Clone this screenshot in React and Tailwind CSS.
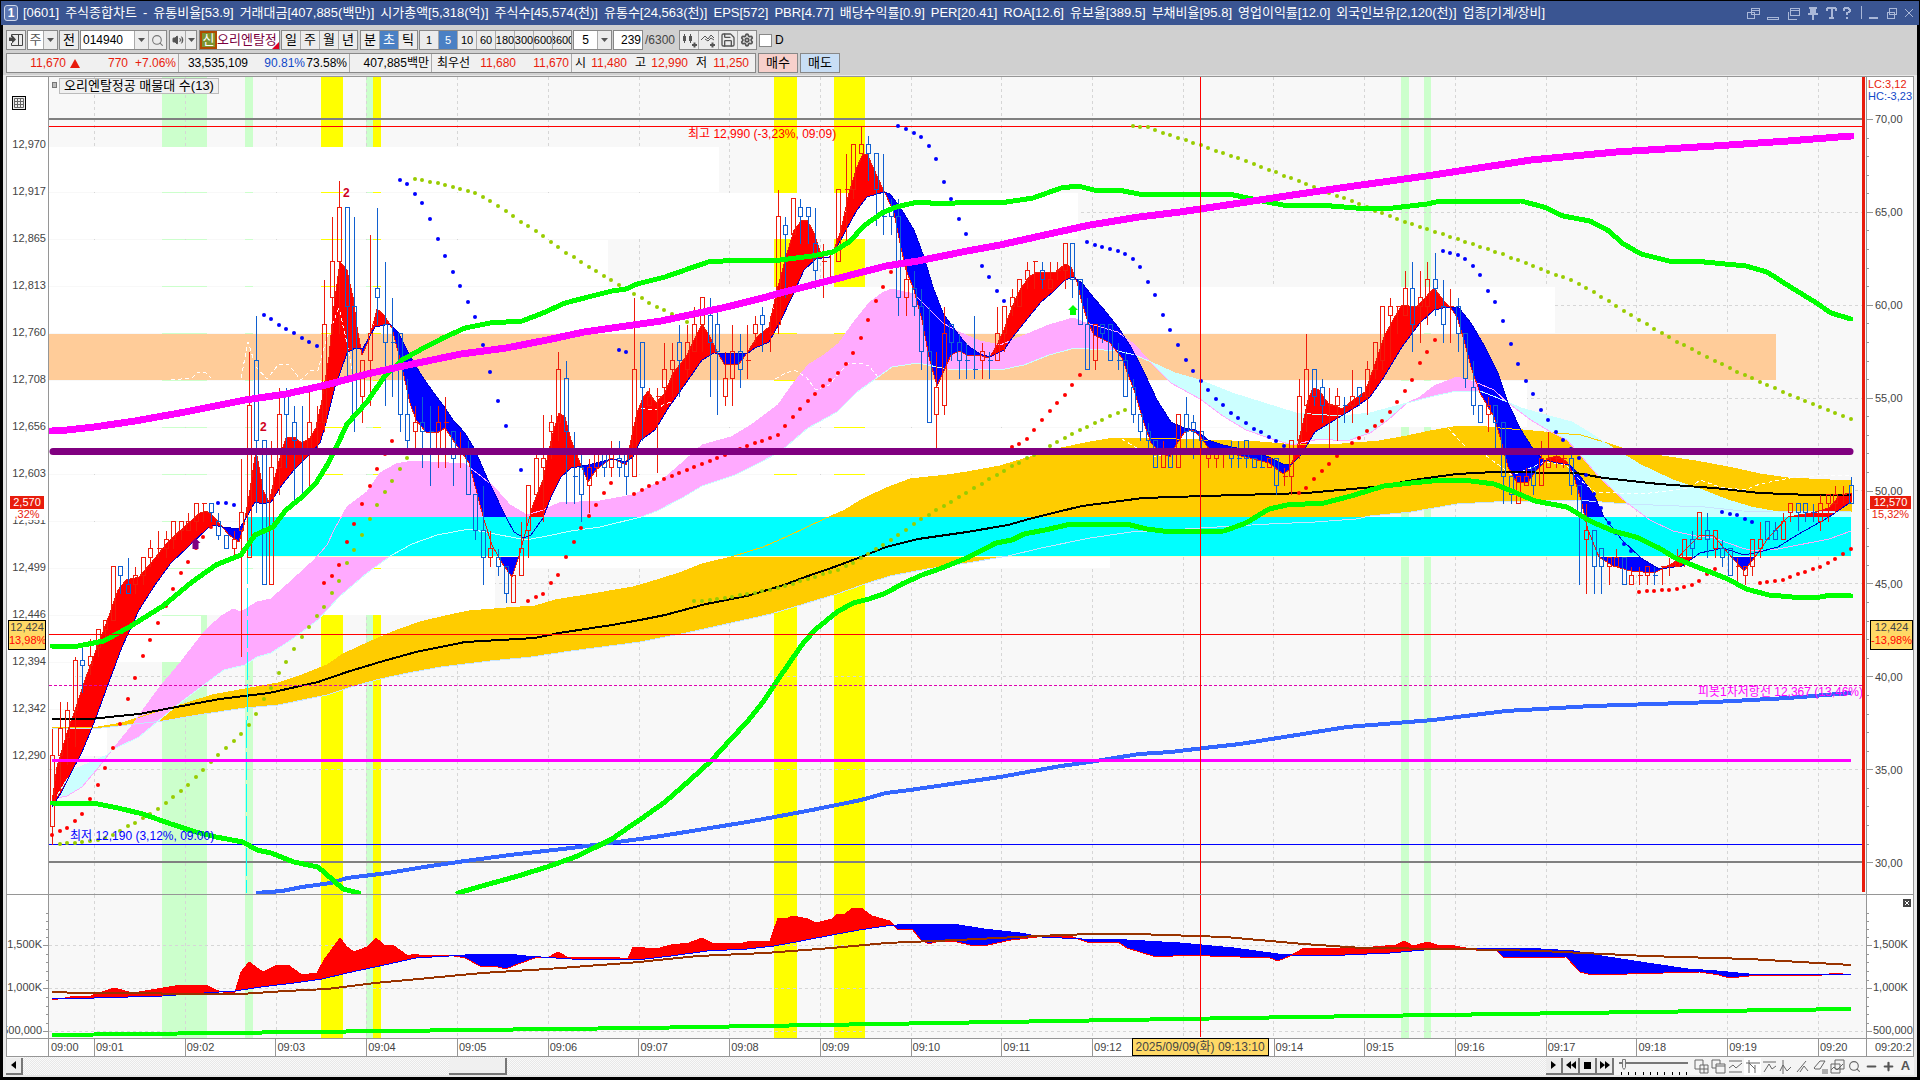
import React from 'react';
import { Search, Save, Settings, Volume2, Plus, Minus } from 'lucide-react';

const STEP = 7.556;
const barX = (i) => Math.round(52.2 + STEP * i);
const tickY = (k) => Math.round(844.3 - 8.975 * k);

const toPoints = (s) => s.trim().split(/\s+/).map((p) => p.split(',').map(Number));

const valueAt = (pts, x) => {
  if (x <= pts[0][0]) return pts[0][1];
  for (let i = 1; i < pts.length; i++) {
    if (x <= pts[i][0]) {
      const [x0, y0] = pts[i - 1];
      const [x1, y1] = pts[i];
      return y0 + ((y1 - y0) * (x - x0)) / (x1 - x0 || 1);
    }
  }
  return pts[pts.length - 1][1];
};

const FAST = `52,802 57,767 67,733 76,707 86,677 100,640 110,613 118,590 126,580 139,577 151,563 167,543 184,527 200,513 206,511 212,515 220,524 229,535 239,542 244,525 250,490 256,450 263,490 269,502 275,477 282,450 286,438 294,437 302,443 310,438 316,428 322,400 329,357 333,313 340,262 347,270 353,297 357,327 362,355 369,340 377,309 384,315 392,328 402,367 410,403 416,420 426,432 437,433 445,428 453,440 465,457 469,463 477,493 484,520 492,545 502,563 512,577 520,553 526,530 533,505 543,480 549,450 553,433 559,413 565,417 571,440 580,463 588,482 596,470 612,458 626,465 631,440 637,413 643,398 648,391 656,403 665,393 673,373 686,357 694,340 702,324 710,337 718,353 724,364 739,364 747,353 757,337 769,327 777,290 786,257 794,230 802,220 807,220 814,233 822,257 829,258 835,247 841,230 849,193 857,167 863,154 867,154 873,167 882,187 886,195 894,213 900,243 906,270 914,290 922,320 929,357 937,386 943,373 951,355 959,351 967,355 982,356 989,358 996,347 1004,330 1012,307 1020,290 1029,277 1037,272 1055,273 1065,264 1071,267 1077,282 1082,303 1088,322 1094,335 1110,343 1122,358 1129,377 1135,393 1143,420 1151,443 1161,453 1170,457 1175,447 1184,433 1192,430 1200,436 1209,449 1246,457 1269,463 1283,474 1289,470 1296,452 1303,423 1308,400 1313,388 1319,390 1328,403 1342,409 1356,398 1365,392 1374,367 1384,337 1393,320 1402,305 1416,307 1425,298 1434,288 1443,300 1450,307 1457,317 1464,340 1471,367 1480,393 1494,417 1501,440 1508,467 1517,483 1528,482 1537,470 1549,458 1558,456 1567,462 1574,477 1581,500 1588,530 1599,557 1613,566 1631,571 1654,573 1673,563 1687,548 1700,535 1714,536 1728,553 1744,571 1755,557 1769,537 1788,517 1811,513 1829,508 1840,495 1851,493`;
const SLOW = `52,807 61,793 71,773 82,752 94,723 106,690 122,647 139,610 155,585 171,563 188,547 208,528 214,525 222,527 239,529 245,520 255,502 263,504 271,502 282,485 294,470 314,450 320,443 326,423 335,387 347,353 355,348 363,348 369,338 375,327 390,324 398,332 408,352 420,373 433,392 443,405 453,420 465,433 475,450 488,480 506,517 514,532 524,538 531,535 543,518 551,497 561,477 571,468 588,465 612,459 626,462 633,457 641,440 655,430 669,407 686,383 702,360 714,353 747,354 755,348 769,342 780,322 792,297 804,270 816,259 829,257 837,247 845,232 857,210 867,197 884,192 890,194 900,207 914,230 924,257 933,287 943,313 955,330 967,345 980,354 990,357 1004,350 1012,338 1024,323 1041,302 1053,292 1065,280 1073,277 1082,283 1094,298 1106,312 1118,327 1131,347 1143,370 1157,400 1171,422 1184,428 1196,430 1208,440 1223,445 1246,450 1269,457 1283,464 1292,464 1301,455 1315,432 1338,418 1356,407 1370,397 1384,377 1402,347 1420,323 1434,310 1448,307 1459,308 1471,323 1485,347 1498,373 1508,403 1521,430 1535,452 1544,460 1558,463 1570,465 1581,477 1595,497 1604,517 1622,540 1641,558 1659,569 1682,566 1700,553 1723,548 1744,555 1755,553 1778,547 1797,535 1829,517 1851,502`;
const CLOUD_A = `57,798 67,796 82,787 98,768 112,750 131,727 143,710 159,688 180,663 204,632 220,617 233,609 241,612 257,602 271,599 290,582 314,560 327,545 335,528 347,507 367,492 380,473 396,464 412,461 449,463 465,464 482,477 494,487 510,505 527,515 543,510 559,503 600,501 633,495 661,481 682,463 702,445 731,437 751,425 778,405 792,385 808,365 824,355 839,343 853,323 869,303 882,293 892,289 914,294 927,307 943,323 959,332 980,341 1000,345 1020,337 1049,325 1073,318 1086,323 1118,332 1135,345 1151,363 1171,383 1200,399 1223,416 1246,430 1269,438 1292,445 1319,439 1347,441 1370,433 1388,420 1407,403 1420,397 1434,386 1457,377 1475,382 1494,390 1508,403 1531,420 1549,431 1567,440 1576,450 1599,477 1627,503 1650,520 1673,531 1696,536 1714,538 1742,548 1755,551 1778,549 1829,539 1851,531`;
const CLOUD_B = `57,796 66,781 75,769 96,760 107,755 112,750 139,737 163,717 180,703 204,685 224,670 245,665 257,657 271,653 294,638 318,620 339,597 367,573 392,555 412,544 437,535 469,529 490,533 526,540 547,536 571,531 600,527 641,517 657,511 682,498 702,486 735,475 759,463 780,452 808,428 837,412 857,392 878,377 892,367 918,363 947,369 1000,370 1024,365 1049,355 1075,348 1118,351 1135,355 1151,362 1175,373 1200,380 1232,393 1264,403 1296,413 1342,416 1370,413 1407,403 1434,396 1457,391 1480,391 1498,398 1521,408 1549,416 1572,422 1590,433 1613,448 1641,465 1673,480 1700,489 1728,500 1751,507 1778,512 1851,512`;
const GOLD_TOP = `52,727 98,727 122,723 155,712 184,704 212,695 245,689 278,683 302,675 327,665 343,654 367,643 392,632 420,622 445,616 469,611 506,608 535,606 555,600 592,594 633,587 657,580 682,572 702,564 731,557 763,547 788,536 824,519 845,510 861,500 886,488 910,479 947,475 967,472 1000,466 1033,456 1061,448 1090,442 1114,438 1147,438 1204,440 1260,442 1296,445 1342,444 1379,441 1407,436 1430,431 1453,427 1475,426 1512,429 1544,432 1581,435 1604,442 1622,448 1655,455 1696,461 1733,468 1760,474 1788,478 1851,481`;
const GOLD_LOW = `52,729 102,728 135,724 163,721 204,714 245,708 278,705 327,695 351,687 380,679 408,673 441,667 490,661 531,657 571,651 640,642 665,637 686,633 731,623 771,614 804,604 837,594 865,584 890,576 927,569 967,563 1008,556 1041,548 1090,538 1131,532 1171,530 1200,528 1269,524 1315,522 1356,519 1370,516 1411,512 1457,504 1494,502 1576,500 1627,504 1705,507 1742,511 1851,512`;
const BLACK = `52,719 90,719 139,714 171,708 220,699 269,693 318,682 347,672 380,662 416,652 465,642 535,638 559,633 612,625 640,620 665,615 706,604 747,596 784,585 808,576 837,566 861,557 886,547 918,539 967,532 1008,525 1029,519 1057,512 1082,506 1143,498 1204,496 1306,493 1374,487 1420,479 1457,474 1494,472 1576,473 1604,478 1659,484 1714,488 1760,493 1811,495 1851,495`;
const MAGENTA = `52,431 67,430 94,427 135,421 185,412 245,400 286,394 326,385 367,374 408,365 461,354 506,348 547,340 584,332 640,324 661,321 722,308 763,298 784,292 812,285 886,266 918,261 967,251 1000,245 1049,234 1090,225 1139,217 1180,212 1240,203 1286,196 1347,187 1433,175 1531,160 1616,152 1714,146 1788,141 1851,136`;
const BLUE = `256,893 282,891 302,887 331,883 347,878 388,873 424,867 465,861 510,855 571,848 640,839 661,836 698,830 747,822 780,816 812,810 861,800 886,793 910,790 951,784 1000,777 1033,771 1061,766 1090,762 1139,754 1171,752 1204,748 1240,744 1347,727 1433,720 1506,711 1592,706 1714,702 1788,698 1851,693`;

const GREENS = [
  `52,646 78,646 104,641 131,626 163,606 192,582 216,565 241,555 255,535 273,527 286,510 302,497 316,483 326,467 335,450 347,424 367,402 384,377 402,360 420,350 443,338 465,328 490,323 522,321 543,313 565,303 592,296 612,291 626,289 637,284 665,277 708,262 739,260 780,260 812,256 833,252 849,242 865,225 882,213 896,207 918,202 943,204 967,202 1000,203 1033,198 1061,188 1078,186 1098,191 1118,190 1139,194 1229,194 1262,201 1283,205 1319,205 1356,208 1393,208 1427,204 1436,202 1521,201 1544,207 1563,216 1590,221 1609,231 1622,243 1641,254 1673,262 1694,261 1746,266 1767,272 1792,288 1815,302 1831,313 1851,319`,
  `52,803 98,804 118,808 143,814 171,824 196,832 216,837 243,842 257,850 271,853 294,862 318,867 333,880 343,889 359,893`,
  `458,893 482,886 518,876 547,867 575,857 596,847 612,839 629,827 641,819 665,802 690,780 712,760 731,739 747,722 763,702 775,684 790,662 804,642 816,629 837,612 853,603 869,599 886,593 902,584 922,575 939,569 967,558 996,543 1012,540 1024,534 1045,530 1071,524 1126,524 1147,529 1171,532 1224,531 1246,523 1269,509 1287,505 1324,503 1351,496 1384,486 1411,483 1443,480 1471,481 1494,484 1512,491 1535,501 1567,507 1590,521 1613,531 1636,537 1659,548 1677,559 1705,570 1728,579 1746,589 1769,595 1792,597 1820,597 1831,595 1851,596`,
];

const WHITE_LINES = [
  `171,380 192,378 198,372 206,373 211,378`,
  `241,378 248,342 256,367 267,379 278,365 288,364 301,380 310,371 318,370 327,337 339,308 347,343 355,385`,
  `641,408 655,410 665,404 675,401`,
  `775,379 786,373 794,370 806,377 816,390 829,385 841,371 849,363 861,363 869,366 878,377`,
  `1122,439 1140,450 1156,457 1175,451 1200,453`,
  `1448,428 1459,440 1471,452 1485,455 1496,463 1512,475 1526,470 1544,462 1566,465 1580,480 1595,492 1620,493 1650,493 1690,488 1700,480 1720,487 1745,490 1760,484 1790,478 1830,475 1850,476`,
];

const BLUE_DOTS = [
  `218,503 225,503 233,505`,
  `263,314 278,324 301,337 316,346`,
  `399,179 407,184 414,193 422,203 429,216 437,236 444,254 452,270 460,286 467,300 475,317 482,341 490,372 497,398 505,422 512,448 520,470`,
  `618,350 626,352`,
  `898,126 905,129 913,132 920,136 928,144 936,159 943,180 951,199 958,217 966,234 981,264 996,289 1004,301`,
  `1087,242 1102,247 1124,253 1132,258 1140,267 1147,280 1155,295 1162,313 1170,330 1185,358 1192,370 1200,380 1215,398 1230,412 1238,418 1253,428 1268,436 1283,446`,
  `1442,251 1457,254 1464,258 1472,265 1480,275 1487,289 1495,302 1502,318 1510,341 1517,362 1525,379 1540,408 1555,431 1570,448 1578,455 1585,473 1593,492 1608,522 1623,543 1631,551`,
  `1721,512 1736,515 1752,522`,
];
const RED_DOTS = [
  `52,835 67,828 82,814 89,801 97,787 104,770 112,751 120,724 127,702 135,678 142,658 157,625 165,608 172,591 180,574 188,562 195,549 203,537 210,527`,
  `324,583 331,578 339,565 346,544 354,524 361,506 369,488 376,471 384,456 392,441`,
  `528,601 543,594 550,584 558,575 565,559 573,544 580,530 588,517 596,505 603,494 611,483`,
  `633,494 656,483 671,476 694,467 724,455 747,446 777,436 784,427 792,418 807,402 822,387 838,373 845,366 852,355 860,340 868,320 875,303 883,287 890,272`,
  `1011,448 1026,440 1034,430 1049,412 1064,396 1072,385 1079,375`,
  `1299,493 1306,488 1321,472 1336,457 1351,444 1366,432 1381,422 1389,413 1396,403 1404,393 1412,380 1419,365 1427,352 1434,340`,
  `1638,592 1676,589 1691,585 1699,581 1706,575 1714,569`,
  `1759,583 1782,580 1804,572 1820,567 1835,559 1850,549`,
];
const OLIVE_DOTS = [
  `59,844 82,842 97,840 112,836 127,827 142,819 157,810 172,798 188,785 203,770 218,755 233,742 240,735 248,727 256,714 263,701 271,688 278,675 293,651 308,628 324,607 339,581 346,565 354,550 369,521 376,507 384,494 392,481 407,458`,
  `414,179 437,183 452,187 475,193 497,205 520,221 543,236 565,252 588,266 618,284 648,302 664,310 686,322`,
  `694,601 701,601 731,597 775,589 808,579 837,570 852,564 861,558 883,545 898,535 920,520 935,511 951,502 966,493 988,480 1011,467 1026,459 1049,447 1064,438 1094,423 1124,410`,
  `1132,126 1147,127 1170,135 1200,145 1223,153 1238,158 1351,201 1381,213 1412,224 1442,234 1472,244 1502,254 1540,269 1578,283 1600,296 1623,310 1653,328 1676,341 1714,360 1744,375 1774,388 1812,404 1850,419`,
];

// colour, high, body top, body bottom, low (10 won ticks above 12,190)
const CANDLES = `r13 10 2 0|r16 13 10 6|r16 15 12 9|r21 20.5 15 11|b22 20.5 20 17|r23 21 20 19|r24 24 22 21|r25 25 24 23|r31 31 25 25|b31 31 30 28|b32 29 28 28|r31 30 29 28
r32 32 30 29|r34 33 32 31|r35 33 33 32|r35 34 33 32|r36 36 34 33|r36 36 35 34|r37 36 35 35|r38 38 36 35|r38 38 38 36|b38 38 37 36|b37 36 34.5 34|b34.5 34.5 33 33
r35 34 33 32|r43 37 35 21|r55 49 32 32|b59 54 45 37|b45 45 29 29|r45 42 29 29|r51 48 42 39|b51 50 48 42|b49 47 45 38|b49 44 44 39|r51 47 44 40|r49 47 47 44
r63 58 47 46|r70 65 61 57|r74 71 65 57|b71 71 60 52|b70 60 48 46|r54 54 50 47|r68 57 54 49|b71 62 61 58|b65 58 56 49|b61 56 56 50|b57 57 48 46|b52 48 45 44
r49 47 46 44|b50 47 46 42|b49 46 46 40|r49 47 44 42|r50 47 47 42|b46 46 43 40|r46 44 44 42|b45 44 39 39|b39 39 35 34|b40 35 32 29|r35 33 32 31|b33 32 31 30
b31 31 28 27|r30 30 27 27|r36 33 30 30|r40 40 35 32|r44 43 39 39|r48 43 42 36|r48 47 46 43|r55 53 47 45|b54 52 46 38|b46 41 41 38|b44 42 39 36|r43 42 40 37
r44 44 42 41|b44 44 42 41|r45 44 42 41|b45 43 42 41|b44 44 41 39|r61 53 41 41|b56 56 51 45|r51 50 49 49|r51 50 50 41.5|r56 53 51 49|r56 54 53 50|b58 56 54 50
r58 56 53 52|r60 58 55 55|r61 61 58 55|b61 59 56 50|b60 58 55 48|r55 52 50 49|r58 55 52 49|b57 55 53 51|r58 54 54 52|r59 58 57 56|b60 59 58 55|r59 57 57 55
r73 70 58 57|b70 69 68 61|r72 72 68 68|b72 71 70 67|b71 71 70 67|b71 67 64 62|r67 65 65 61|r66 66 66 63|r73 73 65 65|r77 73 73 67|r78 78 73 72|r80 78 77 77
b79 78 77 74|b77 77 73 69|b77 70 70 68|b72 71 70 68|b72 70 61 59|r65 63 61 59|b64 62 60 59|b62 60 55 53|b60 55 47 47|r55 51 48 44|r60 57 49 48|b58 58 56 54
b57 56 54 52|b56 54 54 52|b59 53 53 52|r56 55 54 52|b55 54 54 52|r60 57 54 54|r60 60 57 55|r62 61 60 59|r63 63 60 60|r65 64 63 62|r65 65 65 62|b65 64 63 62
r65 63 62 62|r65 64 64 63|r67 67 64 62|b67 67 63 61|b63 63 58 58|b61 58 53 53|r58 58 54 53|b58 58 57 56|b58 58 54 54|b56 54 54 53|b55 54 50 50|b52 51 48 47
b48 48 46 45|b47 46 45 44|b45 45 42 42|r45 44 42 42|b44 44 42 42|r48 48 42 42|b50 48 46 44|b48 47 46 43|b46 46 45 44|r44 44 43 42|r44 44 43 42|r44 44 44 42
b45 44 43 42|b45 43 43 42|b45 45 43 42|b43 43 42 42|b44 42 42 42|r43 43 42 42|b43 43 40 39|r42 41 41 40|r45 45 41 39|r52 50 45 43|r57 53 49 46|b53 53 50 49
b52 51 49 47|r51 49 49 44|r51 50 49 45|b50 49 49 47|r53 50 49 47|b51 51 50 49|r54 53 50 48|r56 56 53 52|r60 60 54 53|r61 60 59 54|r60 60 60 57|r64 62 59 59
b65 62 58 55|r64 61 60 56|r65 63 60 58|b66 63 62 59|b63 60 58 56|r62 60 60 56|b61 60 57 55|b57 57 52 51|b54 51 49 48|b49 49 47 47|r50 49 48 46|b49 49 47 44
b47 47 41 38|b41 41 39 38|r41 41 38 38|r42 41 40 40|b42 42 40 39|r45 43 40 40|r46 43 42 42|r44 43 43 42|r44 43 43 42|b44 43 40 39|b40 40 37 29|r38 35 34 28
b35 35 31 28|b33 33 31 28|r32 32 31 29|r33 32 31 31|b32 32 29 29|r31 30 29 29|r31 30 30 29|r31 31 30 29|b31 30 30 29|r31 31 31 29|r32 31 31 30|r33 32 31 31
r34 34 32 31|b35 34 33 32|r37 37 34 34|b37 35 34 32|r35 35 33 32|b34 33 32 31|b33 33 30 30|r32 31 31 29|r31 31 30 29|r34 34 31 30|r36 34 33 32|b36 36 34 34
b36 35 34 34|r37 36 34 34|r38 38 37 36|b38 38 37 35|b38 38 37 36|b38 37 37 36|r39 38 36 35|r39 39 38 36|r40 39 38 37|r40 39 39 38|b41 40 38 38`
  .split(/[|\n]/)
  .map((s) => ({ up: s[0] === 'r', v: s.slice(1).split(' ').map(Number) }));

const VOL_FAST = `52,1000 65,998 75,996 88,997 102,992 114,988 133,993 163,988 175,986 206,985 216,990 226,993 235,992 241,972 249,962 257,968 263,972 277,965 288,965 302,975 317,973 324,960 340,938 347,947 354,952 367,947 376,938 384,945 394,946 408,956 414,954 424,956 449,955 465,958 482,967 494,966 506,969 518,964 535,958 549,957 558,952 569,958 612,957 628,959 633,947 656,949 671,945 689,943 702,938 712,943 743,943 752,941 770,941 778,918 785,919 793,916 808,919 816,923 832,919 837,914 845,914 853,908 861,908 872,916 890,921 897,929 912,929 921,940 929,944 939,941 953,941 970,945 988,945 1011,940 1037,937 1064,934 1087,942 1118,942 1127,948 1153,956 1167,957 1180,955 1270,958 1278,961 1290,956 1304,948 1329,949 1362,948 1396,945 1404,941 1413,946 1428,942 1437,945 1455,946 1476,950 1496,950 1504,958 1566,957 1580,972 1592,975 1700,972 1719,975 1729,978 1749,976 1823,975 1835,973 1851,975`;
const VOL_SLOW = `52,998 94,998 163,996 204,993 235,991 261,987 294,983 322,979 347,973 375,967 416,958 449,956 482,954 508,954 526,956 571,959 628,960 645,959 671,956 707,951 747,949 774,946 801,941 832,935 859,930 886,926 908,924 953,924 984,929 1020,933 1042,937 1082,939 1127,940 1180,943 1234,948 1278,954 1292,955 1345,955 1390,953 1435,949 1464,948 1500,948 1541,949 1574,951 1602,956 1647,963 1688,969 1717,971 1749,974 1851,975`;
const VOL_BROWN = `52,992 82,993 241,994 286,991 327,989 375,983 429,978 482,973 547,969 640,962 658,960 698,956 765,953 832,948 886,943 957,940 1037,936 1091,934 1136,934 1225,937 1304,944 1362,948 1455,949 1541,951 1647,956 1749,959 1851,965`;
const VOL_GREEN = `52,1035 640,1028 1300,1017 1851,1009`;

const GREEN_BARS = [[162, 45], [245, 8], [366, 7], [1401, 8], [1424, 7]];
const YELLOW_BARS = [[321, 22], [373, 8], [774, 23], [834, 31]];
const PROFILE = [
  [147, 45, 719], [193, 46, 1078], [240, 46, 608], [287, 46, 1555], [381, 46, 1527],
  [428, 46, 1340], [475, 46, 1250], [522, 46, 1110], [569, 46, 495], [616, 46, 201], [663, 46, 75], [710, 46, 107],
];
const MINUTES = Array.from({ length: 20 }, (_, i) => Math.round(94.3 + 90.7 * i));

const Line = ({ d, color, w = 1, dash }) => (
  <polyline points={d} fill="none" stroke={color} strokeWidth={w} strokeDasharray={dash} strokeLinejoin="round" strokeLinecap={w > 4 ? 'round' : 'butt'} />
);

const Band = ({ a, b, over, under }) => {
  const pa = toPoints(a);
  const pb = toPoints(b);
  let up = '';
  let down = '';
  for (let x = pa[0][0]; x < pa[pa.length - 1][0]; x += 2) {
    const ya = valueAt(pa, x + 1);
    const yb = valueAt(pb, x + 1);
    const col = `M${x} ${ya.toFixed(1)}h2V${yb.toFixed(1)}h-2z`;
    if (ya < yb) up += col;
    else down += col;
  }
  return (
    <g shapeRendering="crispEdges">
      <path d={up} fill={over} />
      <path d={down} fill={under} />
    </g>
  );
};

const Dots = ({ lines, color }) =>
  lines.map((l, n) => {
    const pts = toPoints(l);
    const from = Math.round((pts[0][0] - 52.2) / STEP);
    const to = Math.round((pts[pts.length - 1][0] - 52.2) / STEP);
    return (
      <g key={n} fill={color}>
        {Array.from({ length: to - from + 1 }, (_, i) => {
          const x = barX(from + i);
          return <circle key={i} cx={x} cy={Math.round(valueAt(pts, x))} r="2" />;
        })}
      </g>
    );
  });

const Candles = () => (
  <g shapeRendering="crispEdges" fill="none">
    {CANDLES.map(({ up, v }, i) => {
      const x = barX(i) + 0.5;
      const [h, t, b, l] = v.map((k) => tickY(k) + 0.5);
      const body = b - t < 2 ? `M${x - 2} ${t}h5` : `M${x - 2} ${t}h4V${b}h-4z`;
      return <path key={i} d={`M${x} ${h}V${t}M${x} ${b}V${l}${body}`} stroke={up ? '#ee1c0c' : '#1060d0'} />;
    })}
  </g>
);

const Grid = ({ top, bottom, rows }) => (
  <g shapeRendering="crispEdges">
    {GREEN_BARS.map(([x, w]) => <rect key={x} x={x} y={top} width={w} height={bottom - top} fill="#ccffcc" />)}
    {YELLOW_BARS.map(([x, w]) => <rect key={x} x={x} y={top} width={w} height={bottom - top} fill="#ffff00" />)}
    <g stroke="#d6d6d6" strokeDasharray="3 3">
      {MINUTES.map((x) => <path key={x} d={`M${x}.5 ${top}V${bottom}`} />)}
      {rows.map((y) => <path key={y} d={`M49 ${y}.5H1863`} />)}
    </g>
  </g>
);

const PriceChart = () => (
  <svg viewBox="49 77 1817 817" preserveAspectRatio="none" className="absolute inset-0 h-full w-full bg-[#f8f8f8]">
    <Grid top={77} bottom={894} rows={[212, 305, 398, 490, 583, 676, 769]} />
    <g shapeRendering="crispEdges">
      {PROFILE.map(([y, h, x]) => <rect key={y} x="49" y={y} width={x - 49} height={h} fill="#fff" />)}
      <rect x="49" y="334" width="1727" height="46" fill="#ffcc99" />
      <path d="M49 119H1863M49 862H1863" stroke="#808080" strokeWidth="2" />
      <path d="M49 126.5H1863" stroke="#ff0000" />
      <path d="M49 844.5H1863" stroke="#0000ff" />
    </g>
    <Band a={GOLD_TOP} b={GOLD_LOW} over="#ffcc00" under="#ffcc00" />
    <Band a={CLOUD_A} b={CLOUD_B} over="#ffaaff" under="#ccffff" />
    <Band a={FAST} b={SLOW} over="#ff0000" under="#0000ff" />
    <rect x="247" y="517" width="1604" height="39" fill="#00ffff" />
    <path d="M247 556.5H1851" stroke="#ffffcc" />
    <g shapeRendering="crispEdges">
      <Line d={GOLD_TOP} color="#ffcc00" />
      <Line d={GOLD_LOW} color="#c8e4ff" />
      <Line d={CLOUD_A} color="#ffaaff" />
      <Line d={CLOUD_B} color="#ccffff" />
      <Line d={FAST} color="#ee1c0c" />
      <Line d={SLOW} color="#0000cc" />
      {WHITE_LINES.map((l) => <Line key={l} d={l} color="#fff" dash="4 3" />)}
      <Line d={BLACK} color="#000" w={2} />
      <path d="M247.5 556V720M246 720V893" stroke="#00ffff" strokeWidth="1" strokeDasharray="28 4" />
    </g>
    <Candles />
    <Dots lines={OLIVE_DOTS} color="#99cc00" />
    <Dots lines={RED_DOTS} color="#ff0000" />
    <Dots lines={BLUE_DOTS} color="#0000ff" />
    <g shapeRendering="crispEdges">
      <Line d={BLUE} color="#3366ff" w={4} />
      {GREENS.map((l) => <Line key={l} d={l} color="#00ff00" w={5} />)}
      <path d="M52 760.5H1851" stroke="#ff00ff" strokeWidth="3" />
      <path d="M49 685.5H1863" stroke="#e000b0" strokeDasharray="3 2" />
    </g>
    <path d="M53 451.5H1850" stroke="#800080" strokeWidth="7" strokeLinecap="round" />
    <g shapeRendering="crispEdges">
      <Line d={MAGENTA} color="#ff00ff" w={7} />
    </g>
    <path d="M195.5 538l5 5h-2v6h-6v-6h-2z" fill="#800080" />
    <path d="M1073 305l5 5h-2v5h-6v-5h-2z" fill="#00ff00" />
    <g shapeRendering="crispEdges">
      <path d="M49 634.5H1863M1200.5 77V894" stroke="#ff0000" />
      <path d="M1863.5 77V892" stroke="#e81c0c" strokeWidth="3" />
    </g>
  </svg>
);

const VolumeChart = () => (
  <svg viewBox="49 895 1817 143" preserveAspectRatio="none" className="absolute inset-0 h-full w-full bg-[#f8f8f8]">
    <Grid top={895} bottom={1038} rows={[945, 988, 1031]} />
    <Band a={VOL_FAST} b={VOL_SLOW} over="#ff0000" under="#0000ff" />
    <g shapeRendering="crispEdges">
      <Line d={VOL_FAST} color="#ff0000" />
      <Line d={VOL_SLOW} color="#0000ff" />
      <Line d={VOL_BROWN} color="#993300" w={2} />
      <Line d={VOL_GREEN} color="#00ff00" w={4} />
      <path d="M1200.5 895V1037" stroke="#ff0000" />
    </g>
  </svg>
);

const TITLE = [
  '[0601]', '주식종합차트', '-', '유통비율[53.9]', '거래대금[407,885(백만)]', '시가총액[5,318(억)]', '주식수[45,574(천)]', '유통수[24,563(천)]',
  'EPS[572]', 'PBR[4.77]', '배당수익률[0.9]', 'PER[20.41]', 'ROA[12.6]', '유보율[389.5]', '부채비율[95.8]', '영업이익률[12.0]', '외국인보유[2,120(천)]', '업종[기계/장비]',
];

const TitleBar = () => (
  <header className="mx-px mt-px flex h-6 shrink-0 items-center bg-[#3a5592] pl-[3px] pr-1 text-white">
    <span className="mr-[5px] flex h-4 w-[14px] items-center justify-center rounded-[3px] border border-[#d0d8ea] bg-[#5c76b2] text-xs font-bold">1</span>
    <h1 className="flex min-w-0 flex-1 gap-[6px] overflow-hidden whitespace-nowrap leading-5">
      {TITLE.map((t) => <span key={t}>{t}</span>)}
    </h1>
    <svg width="168" height="16" viewBox="0 0 168 16" className="shrink-0" fill="none" stroke="#aab8d8" shapeRendering="crispEdges">
      <path d="M4.5 3.5h8v6h-8zM4.5 5h8M.5 7.5h7v6h-7zM20 12.5h11v2h-11zM43.5 3.5h9v7h-9zM43.5 5h9M41 7v7h9" />
      <path d="M62 2h8v2h-1v4h2v2h-4v5h-2v-5h-4v-2h2V4h-1z" fill="#aab8d8" stroke="none" />
      <path d="M80 3h9M80 3v3M88.5 3v3M84.5 3v10M82 13h5" strokeWidth="2" />
      <path d="M96.5 6V4.5l2-2h2l2 2v2l-3 2V10M99.5 12v2" strokeWidth="2" />
      <path d="M114.5 1v13" />
      <path d="M122 13h9" strokeWidth="2" />
      <path d="M142.5 3.5h7v6h-7zM140.5 7.5h7v6h-7z" fill="#3a5592" />
      <path d="M158 4l8 8M166 4l-8 8" shapeRendering="auto" />
    </svg>
  </header>
);

const Arrow = ({ label, className = 'w-[14px]' }) => (
  <button aria-label={label} className={`flex h-full shrink-0 items-center justify-center border-l border-[#aaa] bg-[#ececec] ${className}`}>
    <svg width="7" height="4" viewBox="0 0 7 4"><path d="M0 0h7L3.5 4z" fill="#555" /></svg>
  </button>
);

const box = 'flex h-5 shrink-0 border border-[#888]';

const Group = ({ items, active, className }) => (
  <div className={`${box} bg-[#ececec] ${className}`}>
    {items.map((t) => (
      <button
        key={t}
        className={`flex min-w-0 flex-1 items-center justify-center overflow-hidden border-l border-[#aaa] first:border-l-0 ${t === active ? 'bg-[#4a80c4] text-white' : ''}`}
      >
        {t}
      </button>
    ))}
  </div>
);

const Toolbar = () => (
  <div className="flex h-5 items-center gap-px pl-[3px] whitespace-nowrap">
    <button aria-label="창 이동" className={`${box} w-5 items-center justify-center bg-[#ececec]`}>
      <svg width="14" height="12" viewBox="0 0 14 12" fill="none" stroke="#444"><path d="M2.500 3V.5h11v11h-11V9M9.500.5v11" /><path d="M0 3.500h3V1l4 4.500-4 4V7H0z" fill="#444" stroke="none" /></svg>
    </button>
    <div className={`${box} w-[31px] bg-white`}>
      <span className="flex-1 self-center text-center text-[#555]">주</span>
      <Arrow label="구분 선택" />
    </div>
    <button className={`${box} w-5 items-center justify-center bg-[#ececec]`}>전</button>
    <div className={`${box} w-[87px] bg-white`}>
      <input aria-label="종목코드" defaultValue="014940" className="w-[53px] bg-white pl-[2px] text-xs outline-none" />
      <Arrow label="종목 선택" />
      <button aria-label="종목 검색" className="flex flex-1 items-center justify-center border-l border-[#aaa] bg-[#ececec]"><Search size={13} color="#777" /></button>
    </div>
    <div className={`${box} ml-px w-7 bg-[#ececec]`}>
      <button aria-label="소리" className="flex flex-1 items-center justify-center"><Volume2 size={12} color="#555" fill="#555" /></button>
      <Arrow label="소리 선택" className="w-[11px]" />
    </div>
    <div className={`${box} relative ml-px w-[81px] bg-white`}>
      <span className="flex w-[17px] shrink-0 items-center justify-center border-2 border-[#b04a00] bg-[#7c9430] text-white">신</span>
      <span className="flex-1 self-center text-[#7a0040]">오리엔탈정</span>
      <svg width="7" height="7" className="absolute bottom-0 right-0"><path d="M7 0v7H0z" fill="#e00020" /></svg>
    </div>
    <Group items={['일', '주', '월', '년']} className="w-[77px]" />
    <Group items={['분', '초', '틱']} active="초" className="ml-px w-[58px]" />
    <Group items={['1', '5', '10', '60', '180', '300', '600', '3600']} active="5" className="w-[153px] text-[11px]" />
    <div className={`${box} w-[39px] bg-white text-xs`}>
      <span className="flex-1 self-center text-center">5</span>
      <Arrow label="주기 선택" />
    </div>
    <input aria-label="봉 개수" defaultValue="239" className="h-5 w-[30px] border border-[#888] bg-white pr-px text-right text-xs outline-none" />
    <span className="w-[34px] pl-px text-xs text-[#444]">/6300</span>
    <div className={`${box} w-[78px] bg-[#ececec] text-[#555]`}>
      <button aria-label="차트 추가" className="flex flex-1 items-center justify-center">
        <svg width="15" height="15" viewBox="0 0 15 15" stroke="#555" fill="#555"><path d="M2.500 1v9M8.500 1v9" /><path d="M1 3h3v5H1zM7 3h3v5H7zM10 11h5v2h-5zM11.500 9.500h2v5h-2z" stroke="none" /></svg>
      </button>
      <button aria-label="지표 추가" className="flex flex-1 items-center justify-center border-l border-[#aaa]">
        <svg width="15" height="15" viewBox="0 0 15 15" stroke="#555" fill="none"><path d="M0 7l4-4 3 3 3-4 3 3M4 6l3 2 3-3 3 2" /><path d="M9 12h5M11.500 9.500v5" strokeWidth="2" /></svg>
      </button>
      <button aria-label="저장" className="flex flex-1 items-center justify-center border-l border-[#aaa]"><Save size={16} /></button>
      <button aria-label="설정" className="flex flex-1 items-center justify-center border-l border-[#aaa]"><Settings size={14} strokeWidth={3} /></button>
    </div>
    <label className="ml-px flex items-center gap-[3px] text-xs">
      <input type="checkbox" className="h-[13px] w-[13px] appearance-none border border-[#888] bg-white" />D
    </label>
  </div>
);

const Q = ({ w, color = 'text-black', sep, children }) => (
  <span className={`flex h-full shrink-0 items-center justify-end ${w} ${color} ${sep ? 'border-r border-[#aaa] pr-[2px]' : ''}`}>{children}</span>
);

const QuoteBar = () => (
  <div className="mt-[3px] flex h-5 items-center gap-[2px] pl-[3px] whitespace-nowrap">
    <div className="flex h-5 w-[750px] shrink-0 items-center border border-[#888] bg-[#f0f0f0] text-xs">
      <Q w="w-[59px]" color="text-[#e81c0c]">11,670</Q>
      <svg width="16" height="9" viewBox="0 0 16 9"><path d="M9 0l5 9H4z" fill="#e81c0c" /></svg>
      <Q w="w-[46px]" color="text-[#e81c0c]">770</Q>
      <Q w="w-[51px]" color="text-[#e81c0c]" sep>+7.06%</Q>
      <Q w="w-[69px]">33,535,109</Q>
      <Q w="w-[57px]" color="text-[#1048c8]">90.81%</Q>
      <Q w="w-[45px]" sep>73.58%</Q>
      <Q w="w-[82px]" sep>407,885백만</Q>
      <Q w="w-[38px]">최우선</Q>
      <Q w="w-[46px]" color="text-[#e81c0c]">11,680</Q>
      <Q w="w-[56px]" color="text-[#e81c0c]" sep>11,670</Q>
      <Q w="w-[14px]">시</Q>
      <Q w="w-[41px]" color="text-[#e81c0c]">11,480</Q>
      <Q w="w-[19px]">고</Q>
      <Q w="w-[42px]" color="text-[#e81c0c]">12,990</Q>
      <Q w="w-[19px]">저</Q>
      <Q w="w-[42px]" color="text-[#e81c0c]">11,250</Q>
    </div>
    <button className="h-5 w-10 border border-[#888] bg-[#f7d0cb]">매수</button>
    <button className="h-5 w-10 border border-[#888] bg-[#c8def5]">매도</button>
  </div>
);

const LEFT_PRICES = ['12,970', '12,917', '12,865', '12,813', '12,760', '12,708', '12,656', '12,603', '12,551', '12,499', '12,446', '12,394', '12,342', '12,290'];
const RIGHT_SCALE = ['70,00', '65,00', '60,00', '55,00', '50,00', '45,00', '40,00', '35,00', '30,00'];

const LeftAxis = () => (
  <div className="relative flex w-[42px] shrink-0 flex-col overflow-hidden border-r border-[#969696] bg-white text-[11px] text-[#444]">
    <button aria-label="표 보기" className="absolute left-[5px] top-[19px] flex h-[14px] w-[14px] items-center justify-center border border-black bg-[#eee]">
      <svg width="10" height="10" viewBox="0 0 10 10" fill="none" stroke="#666"><path d="M.5.5h9v9h-9zM.5 3.500h9M.5 6.500h9M3.500.5v9M6.500.5v9" /></svg>
    </button>
    <div className="flex-[43]" />
    {LEFT_PRICES.map((p) => (
      <div key={p} className="flex min-h-0 flex-[47] items-center justify-end pr-[2px]">{p}</div>
    ))}
    <div className="flex-[116]" />
    <div className="absolute left-[3px] top-[419px] w-[34px] bg-white text-[#e81c0c]">
      <p className="h-[13px] bg-[#e81c0c] text-center leading-[13px] text-white">2,570</p>
      <p className="h-[11px] text-center leading-[11px]">,32%</p>
    </div>
    <div className="absolute left-px top-[543px] w-[38px] border border-black bg-[#ffd966] pb-[2px] text-center leading-[13px]">
      12,424
      <p className="overflow-hidden text-[#ff0000]">13,98%</p>
    </div>
  </div>
);

const RightAxis = () => (
  <div className="relative flex w-[47px] shrink-0 flex-col overflow-hidden border-l border-[#969696] bg-white text-[11px] text-[#444]">
    <svg viewBox="0 0 7 817" preserveAspectRatio="none" className="absolute left-0 top-0 h-full w-[7px]" stroke="#969696" shapeRendering="crispEdges">
      {Array.from({ length: 41 }, (_, i) => <path key={i} d={`M0 ${Math.round(42 + 18.58 * i)}.5h${i % 5 ? 2 : 6}`} />)}
    </svg>
    <div className="absolute left-px top-px leading-3">
      <p className="text-[#e81c0c]">LC:3,12</p>
      <p className="text-[#1048c8]">HC:-3,23</p>
    </div>
    {RIGHT_SCALE.map((p, i) => (
      <div key={p} className={`flex min-h-0 items-end pl-2 ${i ? 'flex-[93]' : 'flex-[50]'}`}>{p}</div>
    ))}
    <div className="flex-[23]" />
    <div className="absolute left-[3px] top-[419px] w-[41px] bg-white text-[#e81c0c]">
      <p className="h-[13px] bg-[#e81c0c] text-center leading-[13px] text-white">12,570</p>
      <p className="h-[11px] text-center leading-[11px]">15,32%</p>
    </div>
    <div className="absolute left-[3px] top-[543px] w-[43px] border border-black bg-[#ffd966] pb-[2px] text-center leading-[13px]">
      12,424
      <p className="text-[#ff0000]">-13,98%</p>
    </div>
  </div>
);

const VOLUME_ROWS = ['flex-[57]', 'flex-[43]', 'flex-[43]'];

const VolumeAxis = ({ labels, side }) => (
  <div className={`relative flex shrink-0 flex-col overflow-hidden border-[#969696] bg-white text-[11px] text-[#444] ${side === 'left' ? 'w-[42px] border-r' : 'w-[47px] border-l'}`}>
    <svg viewBox="0 0 6 143" preserveAspectRatio="none" className={`absolute top-0 h-full w-[6px] ${side === 'left' ? 'right-0 -scale-x-100' : 'left-0'}`} stroke="#969696" shapeRendering="crispEdges">
      {[18, 26, 34, 42, 50, 59, 67, 76, 85, 93, 102, 111, 119, 128, 136].map((y) => <path key={y} d={`M0 ${y}.5h${[50, 93, 136].includes(y) ? 5 : 2}`} />)}
    </svg>
    {side === 'right' && (
      <button aria-label="닫기" className="absolute right-[2px] top-1 flex h-2 w-2 items-center justify-center bg-[#444]">
        <svg width="4" height="4" viewBox="0 0 4 4" stroke="#fff"><path d="M0 0l4 4M4 0L0 4" /></svg>
      </button>
    )}
    {labels.map((t, i) => (
      <div key={t} className={`flex min-h-0 items-end ${VOLUME_ROWS[i]} ${side === 'left' ? 'justify-end pr-[6px]' : 'pl-[6px]'}`}>{t}</div>
    ))}
  </div>
);

const TimeAxis = () => (
  <div className="relative flex h-[18px] shrink-0 items-center border-t border-[#969696] bg-white text-[11px] text-[#444]">
    <span className="h-full w-[41px] shrink-0" />
    <span className="h-full w-[46px] shrink-0 border-l border-[#969696] pl-[2px]">09:00</span>
    {Array.from({ length: 19 }, (_, i) => (
      <span key={i} className="h-full min-w-0 flex-1 border-l border-[#969696] pl-px">
        {i === 12 ? '' : `09:${String(i + 1).padStart(2, '0')}`}
      </span>
    ))}
    <span className="h-full w-[48px] shrink-0 border-l border-[#969696] pl-px">09:20</span>
    <span className="h-full w-[47px] shrink-0 overflow-hidden border-l border-[#969696] pl-2">09:20:2</span>
    <span className="absolute left-[59%] top-[-1px] h-[18px] w-[137px] border border-black bg-[#ffd966] text-center text-xs leading-4 whitespace-nowrap">2025/09/09(화) 09:13:10</span>
  </div>
);

const raised = 'flex h-[17px] w-[17px] shrink-0 items-center justify-center border-r-2 border-b-2 border-[#777] bg-[#ececec]';

const TOOL_ICONS = [
  ['격자', 'M6 10H1V1h8v5M6 6h8v8H6zM6 10h8M10 6v8'],
  ['겹치기', 'M5 9H1V1h8v4M5 5h9v9H5zM5 7h9'],
  ['지그재그', 'M1 2h13M1 13h13M1 9l4-3 3 3 6-5'],
  ['추세', 'M1 4h14M4 1v13M4 4l6 6M10 6v8'],
  ['수평', 'M1 3h13M2 13l5-8 3 5 4-3'],
  ['수직', 'M4 1v14M1 12l3-6 4 6 4-4'],
  ['사선', 'M1 13L10 2M4 13l4-6 4 5'],
  ['지우개', 'M1 9l6-7h5l-5 8H2zM10 10v5M12 10v5M14 10v5'],
  ['복사', 'M5 1h9v9H5zM1 5h9v9H1zM1 11l3-3 3 3 6-6'],
];

const BottomBar = () => (
  <div className="mx-[3px] flex h-[18px] shrink-0 items-center bg-[#f4f4f4]">
    <button aria-label="이전" className={raised}><svg width="5" height="8"><path d="M5 0v8L0 4z" /></svg></button>
    <div className="flex h-full min-w-0 flex-1 items-center bg-[repeating-conic-gradient(#e8e8e8_0_25%,#fafafa_0_50%)] bg-[length:2px_2px]">
      <div className="ml-[28%] h-[17px] w-[58px] border-b-2 border-r-2 border-[#777] bg-[#f0f0f0]" />
    </div>
    <button aria-label="재생" className={raised}><svg width="5" height="8"><path d="M0 0v8l5-4z" /></svg></button>
    <button aria-label="뒤로" className={raised}><svg width="10" height="8"><path d="M5 0v8L0 4zM10 0v8L5 4z" /></svg></button>
    <button aria-label="정지" className={raised}><svg width="7" height="7"><path d="M0 0h7v7H0z" /></svg></button>
    <button aria-label="앞으로" className={raised}><svg width="10" height="8"><path d="M0 0v8l5-4zM5 0v8l5-4z" /></svg></button>
    <label className="relative ml-[5px] mr-1 h-[17px] w-[70px] shrink-0">
      <input type="range" aria-label="속도" defaultValue="0" className="absolute inset-0 h-2 w-full opacity-0" />
      <svg width="70" height="17" viewBox="0 0 70 17" fill="none" stroke="#777">
        <path d="M0 5h69" strokeWidth="2" />
        <path d="M3.500 1.500h3v8l-1.500 2-1.500-2z" fill="#eee" />
        <path d="M2.500 14v3M9.500 14v3M16.500 14v3M24.500 14v3M31.500 14v3M38.500 14v3M45.500 14v3M53.500 14v3M60.500 14v3M67.500 14v3" stroke="#000" />
      </svg>
    </label>
    {TOOL_ICONS.map(([name, d], i) => (
      <button key={name} aria-label={name} className={`flex h-[17px] w-[17px] shrink-0 items-center justify-center ${i === 3 ? 'bg-white' : ''}`}>
        <svg width="15" height="15" viewBox="0 0 15 15" fill="none" stroke="#666"><path d={d} /></svg>
      </button>
    ))}
    <button aria-label="확대경" className="flex w-[17px] shrink-0 justify-center"><Search size={13} color="#666" /></button>
    <button aria-label="축소" className="flex w-[17px] shrink-0 justify-center"><Minus size={13} color="#555" strokeWidth={4} /></button>
    <button aria-label="확대" className="flex w-[17px] shrink-0 justify-center"><Plus size={13} color="#555" strokeWidth={4} /></button>
    <button className="w-[17px] shrink-0 text-center font-bold text-[#555]">A</button>
  </div>
);

const App = () => (
  <div className="flex h-screen min-h-[600px] flex-col overflow-hidden bg-black pb-[3px] font-['Liberation_Sans','Noto_Sans_CJK_KR',sans-serif] text-[13px] leading-4 text-black">
    <TitleBar />
    <main className="mx-[3px] flex min-h-0 flex-1 flex-col bg-[#e8e8e8] pb-[2px]">
      <div className="shrink-0 bg-[#d0d0d0] pb-[2px] pt-[5px]">
        <Toolbar />
        <QuoteBar />
      </div>
      <div className="mx-[3px] mt-px flex min-h-0 flex-1 flex-col border border-[#969696]">
        <section className="flex min-h-0 flex-[817]">
          <LeftAxis />
          <div className="relative min-w-0 flex-1 overflow-hidden whitespace-nowrap text-xs">
            <PriceChart />
            <span className="absolute left-[3px] top-[5px] h-[6px] w-[5px] border border-[#777] bg-[#bbb]" />
            <span className="absolute left-[10px] top-px h-4 border border-[#bbb] bg-[#f0f0f0] px-1 text-[13px] leading-[14px]">오리엔탈정공 매물대 수(13)</span>
            <span className="absolute left-[639px] top-[49px] text-[#ff0000]">최고 12,990 (-3,23%, 09:09)</span>
            <span className="absolute left-[21px] top-[751px] text-[#0000ff]">최저 12,190 (3,12%, 09:00)</span>
            <span className="absolute right-[3px] top-[607px] text-[#ff00ff]">피봇1차저항선 12,367 (13,46%)</span>
            <span className="absolute left-[294px] top-[108px] font-bold text-[#d00020]">2</span>
            <span className="absolute left-[211px] top-[342px] font-bold text-[#d00020]">2</span>
          </div>
          <RightAxis />
        </section>
        <section className="flex min-h-0 flex-[143] border-t border-[#969696]">
          <VolumeAxis side="left" labels={['1,500K', '1,000K', '500,000']} />
          <div className="relative min-w-0 flex-1">
            <VolumeChart />
          </div>
          <VolumeAxis side="right" labels={['1,500K', '1,000K', '500,000']} />
        </section>
        <TimeAxis />
      </div>
      <BottomBar />
    </main>
  </div>
);

export default App;
